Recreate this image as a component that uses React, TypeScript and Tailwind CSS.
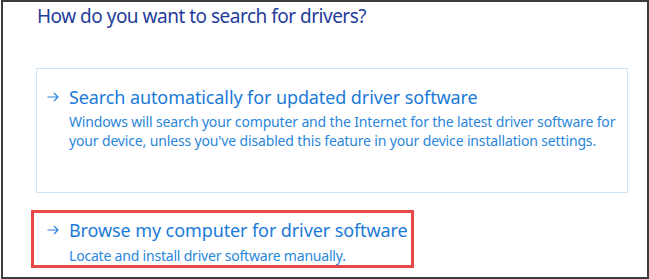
import React from "react";

const font = { fontFamily: '"Segoe UI", "Noto Sans", "Open Sans", sans-serif' };

function Arrow() {
  return (
    <svg width="12" height="10" viewBox="0 0 12 10" className="shrink-0">
      <path d="M0.5 5 H11 M7 1 L11 5 L7 9" fill="none" stroke="#2a86da" strokeWidth="1.2" />
    </svg>
  );
}

export default function App() {
  return (
    <div className="w-[649px] h-[279px] bg-white" style={font}>
      <div className="ml-[1px] w-[648px] h-[279px] border-2 border-[#3c3c3c] flex flex-col">
        <div className="pl-[34px] text-[19px] leading-[28px] tracking-[-0.5px] text-[#1f3d9b] whitespace-nowrap">
          How do you want to search for drivers?
        </div>
        <div className="ml-[33px] mt-[38px] w-[592px] h-[125px] border border-[#cfe3f7] flex flex-col pl-[10px] pt-[14px]">
          <div className="flex items-center gap-[10px]">
            <Arrow />
            <span className="text-[18px] leading-[28px] tracking-[-0.1px] text-[#1a7ad8] whitespace-nowrap">
              Search automatically for updated driver software
            </span>
          </div>
          <div className="pl-[22px] mt-[1px] text-[14px] leading-[19px] tracking-[-0.15px] text-[#2a86da] whitespace-nowrap">
            Windows will search your computer and the Internet for the latest driver software for
            <br />
            your device, unless you've disabled this feature in your device installation settings.
          </div>
        </div>
        <div className="ml-[28px] mt-[17px] w-[383px] h-[58px] border-[3px] border-[#e84848] flex flex-col pl-[13px] pt-[4px]">
          <div className="flex items-center gap-[10px]">
            <Arrow />
            <span className="text-[18px] leading-[26px] tracking-[-0.1px] text-[#1a7ad8] whitespace-nowrap">
              Browse my computer for driver software
            </span>
          </div>
          <div className="pl-[22px] mt-[3px] text-[14px] leading-[19px] tracking-[-0.2px] text-[#2a86da] whitespace-nowrap">
            Locate and install driver software manually.
          </div>
        </div>
      </div>
    </div>
  );
}
